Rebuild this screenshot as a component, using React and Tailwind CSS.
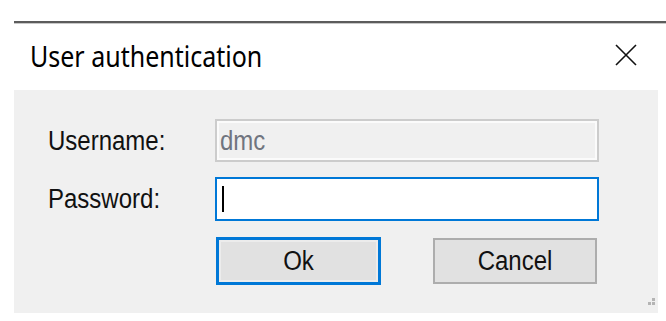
import React from 'react';

const label = "font-['Liberation_Sans',Arial,sans-serif] text-[24px] text-[#111] inline-block scale-y-[1.15]";

const Grip = () => (
  <svg width="12" height="12" viewBox="0 0 12 12" className="absolute right-[2px] bottom-[3px]">
    <rect x="8" y="0" width="3" height="3" fill="#b4b4b4" />
    <rect x="4" y="4" width="3" height="3" fill="#b4b4b4" />
    <rect x="8" y="4" width="3" height="3" fill="#b4b4b4" />
  </svg>
);

const App = () => {
  return (
    <div className="w-[666px] h-[321px] bg-white overflow-hidden">
      <div className="pt-[21px] pl-[14px]">
        {/* Window top edge */}
        <div className="h-[2px] bg-[#5c5c5c]" />
        <div className="h-px bg-[#c8c8c8]" />

        {/* Title bar */}
        <div className="h-[66px] flex items-center justify-between pl-[16px] pr-[28px]">
          <span className="font-['Noto_Sans','Open_Sans',sans-serif] text-[25px] text-black inline-block scale-y-[1.18] -mt-[2px]">
            User authentication
          </span>
          <svg width="24" height="24" viewBox="0 0 24 24" className="-mt-[5px]">
            <path d="M2 2 L22 22 M22 2 L2 22" stroke="#111" strokeWidth="1.6" fill="none" />
          </svg>
        </div>

        {/* Body */}
        <div className="relative w-[644px] h-[223px] bg-[#f0f0f0] pt-[29px] pl-[34px]">
          <div className="flex items-center h-[43px]">
            <div className="w-[167px]">
              <span className={label}>Username:</span>
            </div>
            <div className="w-[384px] h-[43px] border-2 border-[#cccccc] bg-[#f0f0f0] flex items-center">
              <div className="w-full h-full border-2 border-[#fbfbfb] flex items-center pl-[1px]">
                <span className="font-['Liberation_Sans',Arial,sans-serif] text-[24px] text-[#70757f] inline-block scale-y-[1.15]">dmc</span>
              </div>
            </div>
          </div>

          <div className="flex items-center h-[44px] mt-[15px]">
            <div className="w-[167px]">
              <span className={label}>Password:</span>
            </div>
            <div className="w-[384px] h-[44px] border-2 border-[#0078d7] bg-white flex items-center pl-[5px]">
              <div className="w-[2px] h-[26px] bg-black" />
            </div>
          </div>

          <div className="flex mt-[16px] pl-[168px] gap-[52px]">
            <button className="w-[165px] h-[48px] border-[3px] border-[#0078d7] bg-[#e1e1e1] p-0">
              <div className="w-full h-full border-2 border-[#ececec] flex items-center justify-center">
                <span className={label}>Ok</span>
              </div>
            </button>
            <button className="w-[164px] h-[46px] mt-px border-2 border-[#adadad] bg-[#e1e1e1] flex items-center justify-center">
              <span className={label}>Cancel</span>
            </button>
          </div>

          <Grip />
        </div>
      </div>
    </div>
  );
};

export default App;
